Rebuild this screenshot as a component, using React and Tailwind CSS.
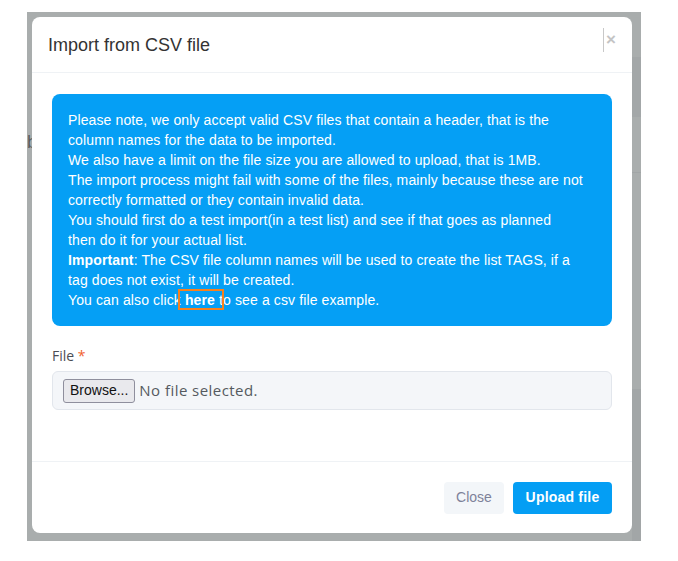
import React from 'react';

const App = () => {
    return (
        <div className="w-[678px] h-[561px] bg-white pl-[27px] pt-[12px] font-['Liberation_Sans',Arial,sans-serif]">
            {/* dimmed page behind the modal */}
            <div className="relative w-[614px] h-[529px] bg-[#a9adad] pl-[5px] pt-[5px]">
                <div className="absolute left-0 top-[121px] text-[#5b5f60] text-[18px] leading-none w-[5px] overflow-hidden">b</div>
                <div className="absolute right-0 top-[45px] w-[9px] h-[60px] bg-[#a3a7a8]" />
                <div className="absolute right-0 top-[160px] w-[9px] h-px bg-[#a1a5a6]" />
                <div className="absolute right-0 top-[377px] w-[9px] h-[152px] bg-[#a2a6a7]" />

                <div className="relative w-[600px] h-[516px] bg-white rounded-[8px] flex flex-col">
                    {/* header */}
                    <div className="h-[56px] shrink-0 border-b border-[#eff2f5] flex items-center justify-between pl-[16px] pr-[16px]">
                        <h3 className="text-[18px] text-[#333333] leading-none">Import from CSV file</h3>
                        <button className="flex items-center h-[24px] border-l border-[#c8c8c8] pl-[2px] text-[#c4c4c4] text-[17px] font-bold leading-none -mt-[10px]">
                            ×
                        </button>
                    </div>

                    {/* body */}
                    <div className="flex-1 px-[20px] pt-[21px]">
                        <div className="bg-[#059ff5] rounded-[8px] px-[16px] py-[16px] text-white text-[14px] leading-[20px] tracking-[0.12px] whitespace-nowrap">
                            Please note, we only accept valid CSV files that contain a header, that is the
                            <br />
                            column names for the data to be imported.
                            <br />
                            We also have a limit on the file size you are allowed to upload, that is 1MB.
                            <br />
                            The import process might fail with some of the files, mainly because these are not
                            <br />
                            correctly formatted or they contain invalid data.
                            <br />
                            You should first do a test import(in a test list) and see if that goes as planned
                            <br />
                            then do it for your actual list.
                            <br />
                            <b>Important</b>: The CSV file column names will be used to create the list TAGS, if a
                            <br />
                            tag does not exist, it will be created.
                            <br />
                            You can also click{' '}
                            <a className="relative font-bold text-white">
                                here
                                <span className="absolute left-[-7px] right-[-9px] top-[-3px] bottom-[-2px] border-2 border-[#f7811e]" />
                            </a>{' '}
                            to see a csv file example.
                        </div>

                        <label className="block mt-[22px] mb-[7px] text-[14px] leading-[16px] text-[#4a4d55] font-['Open_Sans',sans-serif]">
                            File <span className="text-[#f1612e]">*</span>
                        </label>
                        <div className="h-[39px] bg-[#f4f6f9] border border-[#e2e6ec] rounded-[6px] flex items-center pl-[10px] gap-[4px]">
                            <span className="h-[24px] px-[6px] flex items-center bg-[#e9e9ed] border border-[#8f8f9d] rounded-[3px] text-[14px] text-[#111]">
                                Browse...
                            </span>
                            <span className="text-[15px] tracking-[0.45px] text-[#555a60] font-['Open_Sans',sans-serif]">No file selected.</span>
                        </div>
                    </div>

                    {/* footer */}
                    <div className="h-[72px] shrink-0 border-t border-[#eff2f5] flex items-center justify-end gap-[9px] pr-[20px]">
                        <button className="h-[32px] w-[60px] rounded-[4px] bg-[#f3f6f9] text-[#7e8299] text-[14px]">Close</button>
                        <button className="h-[32px] w-[99px] rounded-[4px] bg-[#049ef4] text-white text-[14px] font-bold tracking-[0.2px]">Upload file</button>
                    </div>
                </div>
            </div>
        </div>
    );
};

export default App;
